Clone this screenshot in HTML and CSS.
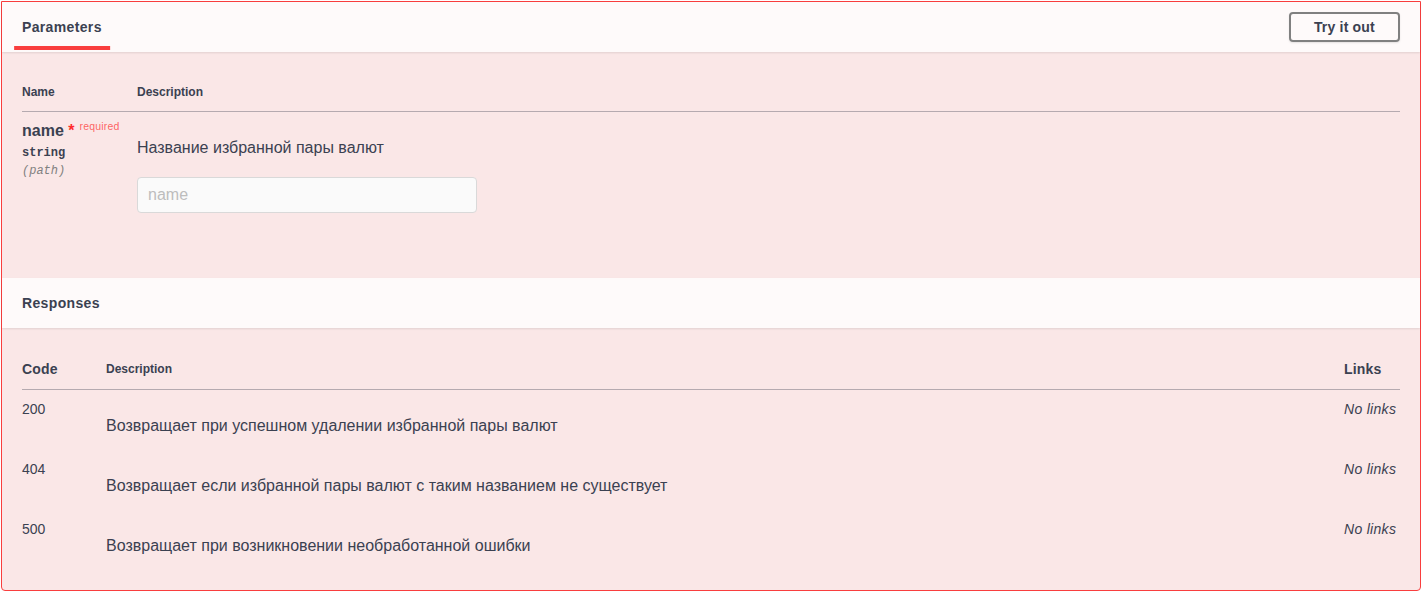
FILE: index.html
```html
<!DOCTYPE html>
<html lang="ru">
<head>
<meta charset="utf-8">
<title>DELETE</title>
<link rel="stylesheet" href="styles.css">
</head>
<body>
<div class="opblock">
  <div class="section-header">
    <div class="tab-header">
      <h4 class="opblock-title"><span class="tab-active">Parameters</span></h4>
    </div>
    <button class="btn try-out">Try it out</button>
  </div>
  <div class="params-body">
    <table class="params-table">
      <thead>
        <tr>
          <th class="col-name">Name</th>
          <th>Description</th>
        </tr>
      </thead>
      <tbody>
        <tr>
          <td class="param-name-cell">
            <div class="param-name">name<span class="star">&nbsp;*</span><span class="req">required</span></div>
            <div class="param-type">string</div>
            <div class="param-in">(path)</div>
          </td>
          <td class="param-desc">
            <p class="md desc-p">Название избранной пары валют</p>
            <input class="param-input" type="text" placeholder="name" disabled>
          </td>
        </tr>
      </tbody>
    </table>
  </div>
  <div class="section-header">
    <h4 class="opblock-title">Responses</h4>
  </div>
  <div class="responses-inner">
    <table class="responses-table">
      <thead>
        <tr>
          <th class="col-code big">Code</th>
          <th>Description</th>
          <th class="col-links big">Links</th>
        </tr>
      </thead>
      <tbody>
        <tr>
          <td class="code">200</td>
          <td class="rdesc"><p class="md">Возвращает при успешном удалении избранной пары валют</p></td>
          <td class="links">No links</td>
        </tr>
        <tr>
          <td class="code">404</td>
          <td class="rdesc"><p class="md">Возвращает если избранной пары валют с таким названием не существует</p></td>
          <td class="links">No links</td>
        </tr>
        <tr>
          <td class="code">500</td>
          <td class="rdesc"><p class="md">Возвращает при возникновении необработанной ошибки</p></td>
          <td class="links">No links</td>
        </tr>
      </tbody>
    </table>
  </div>
</div>
</body>
</html>
```
FILE: styles.css
```css
* { box-sizing: border-box; }

html, body {
  margin: 0;
  padding: 0;
  background: #ffffff;
}

body {
  font-family: "Liberation Sans", Arial, sans-serif;
  color: #3b4151;
}

.opblock {
  margin: 1px 3px 2px 1px;
  border: 1px solid #f93e3e;
  border-radius: 0 0 4px 4px;
  background: #fae7e7;
}

.section-header {
  display: flex;
  align-items: center;
  min-height: 50px;
  padding: 8px 20px;
  background: rgba(255, 255, 255, 0.8);
  box-shadow: 0 1px 2px rgba(0, 0, 0, 0.1);
  position: relative;
}

.tab-header {
  flex: 1;
  display: flex;
}

.opblock-title {
  margin: 0;
  font-size: 14px;
  line-height: 16px;
  font-weight: 700;
  letter-spacing: 0.35px;
  color: #3b4151;
  flex: 1;
}

.tab-active {
  position: relative;
}

.tab-active::after {
  content: "";
  position: absolute;
  left: 50%;
  bottom: -15px;
  width: 120%;
  height: 4px;
  transform: translateX(-50%);
  background: #f93e3e;
}

.btn.try-out {
  font-family: "Liberation Sans", Arial, sans-serif;
  font-size: 14px;
  line-height: 16px;
  font-weight: 700;
  letter-spacing: 0.2px;
  color: #3b4151;
  padding: 5px 23px;
  background: transparent;
  border: 2px solid #808080;
  border-radius: 4px;
  box-shadow: 0 1px 2px rgba(0, 0, 0, 0.1);
}

.params-body {
  padding: 20px 20px 50px;
}

table {
  width: 100%;
  border-collapse: collapse;
}

th {
  text-align: left;
  font-size: 12px;
  line-height: 16px;
  font-weight: 700;
  padding: 12px 0 11px;
  border-bottom: 1px solid rgba(59, 65, 81, 0.2);
  color: #3b4151;
  vertical-align: bottom;
}

.col-name { width: 115px; }

td {
  padding: 10px 0;
  vertical-align: top;
}

.param-name {
  font-size: 16px;
  line-height: 18px;
  font-weight: 700;
  white-space: nowrap;
}

.star {
  color: #ff2b2b;
}

.req {
  position: relative;
  top: -6px;
  padding: 5px;
  font-size: 10.5px;
  font-weight: 400;
  letter-spacing: 0.2px;
  color: rgba(255, 0, 0, 0.6);
}

.param-type {
  padding: 5px 0 4px;
  font-family: "Liberation Mono", "DejaVu Sans Mono", monospace;
  font-size: 12px;
  line-height: 14px;
  font-weight: 700;
}

.param-in {
  font-family: "Liberation Mono", "DejaVu Sans Mono", monospace;
  font-size: 12px;
  line-height: 14px;
  font-style: italic;
  color: #808080;
}

.md {
  margin: 16px 0;
  font-size: 16px;
  line-height: 18px;
  color: #3b4151;
}

.desc-p {
  margin: 17px 0 20px;
}

.param-input {
  display: block;
  width: 340px;
  margin: 0 0 5px;
  padding: 8px 10px;
  font-family: "Liberation Sans", Arial, sans-serif;
  font-size: 16px;
  line-height: 18px;
  height: 36px;
  background: #fafafa;
  border: 1px solid #d9d9d9;
  border-radius: 4px;
  color: #3b4151;
}

.param-input::placeholder {
  color: #bdbdbd;
}

.responses-inner {
  padding: 20px;
}

.responses-table th {
  line-height: 17px;
  padding: 13px 0 11px;
}

.responses-table th.big {
  font-size: 14px;
  letter-spacing: 0.2px;
}

.responses-table td {
  padding: 11px 0 9px;
}

.col-code { width: 84px; }
.col-links { width: 56px; }

.code {
  font-size: 14px;
  line-height: 17px;
}

.rdesc .md {
  margin: 16px 0 6px;
}

.links {
  font-size: 14px;
  line-height: 17px;
  font-style: italic;
  letter-spacing: 0.3px;
  white-space: nowrap;
}
```
